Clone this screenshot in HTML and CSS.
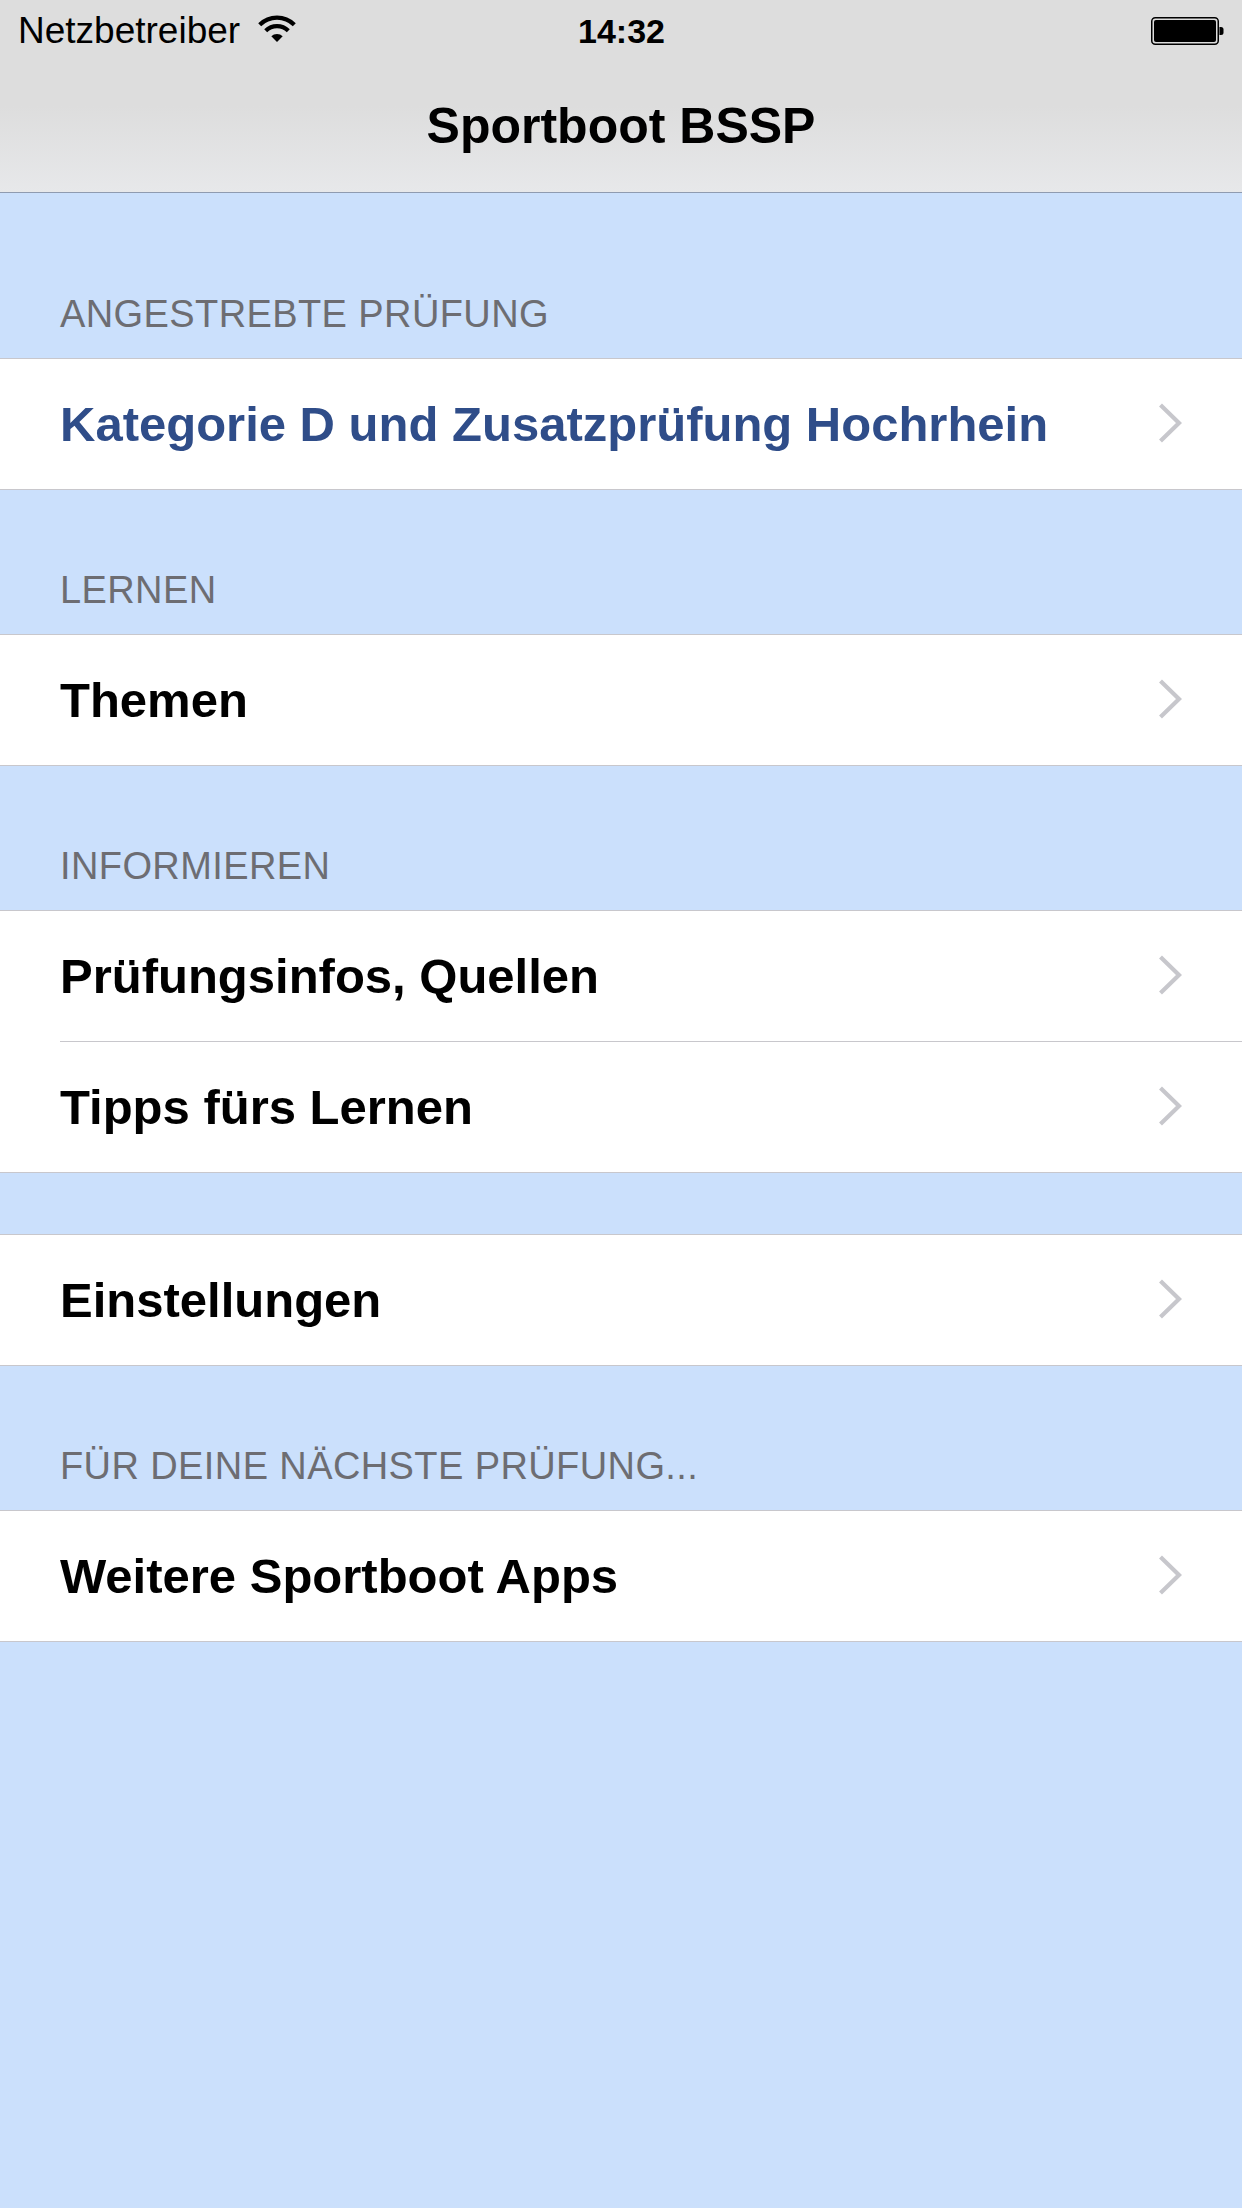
FILE: index.html
```html
<!DOCTYPE html>
<html lang="de">
<head>
  <meta charset="UTF-8">
  <meta name="viewport" content="width=device-width, initial-scale=1.0">
  <title>Sportboot BSSP</title>
  <link rel="stylesheet" href="styles.css">
</head>
<body>
  <header class="topbar">
    <div class="status">
      <div class="status-left">
        <span>Netzbetreiber</span>
        <svg class="wifi" width="38" height="28" viewBox="0 0 38 28">
          <path d="M19 27 L13.3 21.3 A8 8 0 0 1 24.7 21.3 Z" fill="#000"/>
          <path d="M7.7 15.7 A16 16 0 0 1 30.3 15.7" fill="none" stroke="#000" stroke-width="4.2"/>
          <path d="M1.7 9.7 A24.5 24.5 0 0 1 36.3 9.7" fill="none" stroke="#000" stroke-width="4.2"/>
        </svg>
      </div>
      <div class="status-time">14:32</div>
      <div class="status-right">
        <svg class="battery" width="74" height="28" viewBox="0 0 74 28">
          <rect x="0.75" y="0.75" width="66.5" height="26.5" rx="3.5" fill="none" stroke="#000" stroke-width="1.5"/>
          <rect x="3" y="3" width="62" height="22" rx="2" fill="#000"/>
          <path d="M68.5 10 h1.5 a2.5 2.5 0 0 1 2.5 2.5 v3 a2.5 2.5 0 0 1 -2.5 2.5 h-1.5 Z" fill="#000"/>
        </svg>
      </div>
    </div>
    <div class="navbar">
      <h1>Sportboot BSSP</h1>
    </div>
  </header>

  <main class="table">
    <div class="section-head first">Angestrebte Prüfung</div>
    <ul class="group">
      <li class="cell selected">Kategorie D und Zusatzprüfung Hochrhein</li>
    </ul>

    <div class="section-head">Lernen</div>
    <ul class="group">
      <li class="cell">Themen</li>
    </ul>

    <div class="section-head">Informieren</div>
    <ul class="group">
      <li class="cell">Prüfungsinfos, Quellen</li>
      <li class="cell">Tipps fürs Lernen</li>
    </ul>

    <div class="section-head empty"></div>
    <ul class="group">
      <li class="cell">Einstellungen</li>
    </ul>

    <div class="section-head">Für deine nächste Prüfung...</div>
    <ul class="group">
      <li class="cell">Weitere Sportboot Apps</li>
    </ul>
  </main>
</body>
</html>
```

FILE: styles.css
```css
body {
  margin: 0;
  padding: 0;
  min-height: 2208px;
  background: #cbe0fc;
  font-family: "Liberation Sans", Arial, sans-serif;
  color: #000;
}
.topbar {
  height: 192px;
  background: linear-gradient(to bottom, #dddddd 0%, #dddddd 55%, #e7e8ea 100%);
  border-bottom: 1px solid #8f9bb0;
}
.status {
  height: 60px;
  display: grid;
  grid-template-columns: 1fr auto 1fr;
  align-items: center;
  padding: 0 17px 0 18px;
  font-size: 37px;
  line-height: 37px;
}
.status-left {
  display: flex;
  align-items: center;
  gap: 18px;
}
.status-left .wifi {
  margin-top: -2px;
}
.status-time {
  font-weight: bold;
  font-size: 34px;
  line-height: 34px;
  margin-top: 2px;
}
.status-right {
  display: flex;
  justify-content: flex-end;
  margin-top: 2px;
}
.navbar {
  height: 132px;
  display: flex;
  align-items: center;
  justify-content: center;
}
.navbar h1 {
  margin: 0;
  font-size: 50px;
  line-height: 50px;
  font-weight: bold;
}
.section-head {
  height: 144px;
  box-sizing: border-box;
  display: flex;
  align-items: flex-end;
  padding: 0 60px 25px;
  font-size: 38px;
  line-height: 38px;
  letter-spacing: 0.4px;
  color: #6d6d72;
  text-transform: uppercase;
}
.section-head.first {
  height: 165px;
}
.section-head.empty {
  height: 61px;
  padding: 0;
}
.group {
  list-style: none;
  margin: 0;
  padding: 0 0 0 60px;
  background: #fff;
  border-top: 1px solid #c8c7cc;
  border-bottom: 1px solid #c8c7cc;
}
.cell {
  height: 130px;
  display: flex;
  align-items: center;
  padding-right: 60px;
  font-size: 49px;
  line-height: 49px;
  font-weight: bold;
}
.cell + .cell {
  border-top: 1px solid #c8c7cc;
}
.cell::after {
  content: "";
  margin-left: auto;
  width: 24px;
  height: 40px;
  flex-shrink: 0;
  background: url("data:image/svg+xml;utf8,<svg xmlns='http://www.w3.org/2000/svg' width='24' height='40' viewBox='0 0 24 40'><polyline points='2.5,2 21,20 2.5,38' fill='none' stroke='%23c7c7cc' stroke-width='4.2'/></svg>") no-repeat center;
  margin-top: -2px;
}
.cell.selected {
  color: #2f4d89;
}
```
